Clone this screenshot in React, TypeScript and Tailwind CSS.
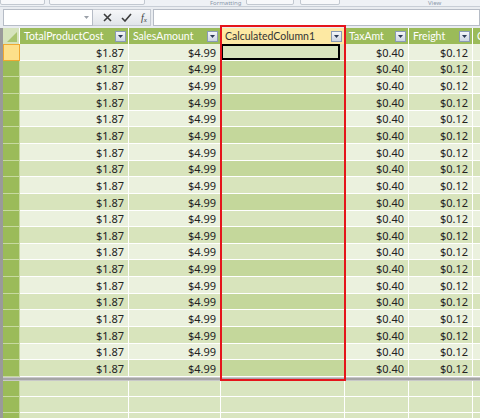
import React from 'react'

const font = { fontFamily: '"Noto Sans", "Open Sans", sans-serif' }
const headFont = { fontFamily: 'Lato, "Noto Sans", sans-serif' }

type Col = { key: string; title: string; width: string; value: string; calc?: boolean }

const cols: Col[] = [
  { key: 'tpc', title: 'TotalProductCost', width: 'w-[109px]', value: '$1.87' },
  { key: 'sa', title: 'SalesAmount', width: 'w-[92px]', value: '$4.99' },
  { key: 'calc', title: 'CalculatedColumn1', width: 'w-[124px]', value: '', calc: true },
  { key: 'tax', title: 'TaxAmt', width: 'w-[64px]', value: '$0.40' },
  { key: 'fr', title: 'Freight', width: 'w-[64px]', value: '$0.12' },
  { key: 'next', title: 'C', width: 'w-[20px]', value: '' },
]

const ROWS = 20

function rowHeight(i: number) {
  return Math.round((i + 1) * 16.65) - Math.round(i * 16.65)
}

function FilterButton() {
  return (
    <span className="flex h-[11px] w-[11px] shrink-0 items-center justify-center border border-[#8a9bb5] bg-gradient-to-b from-[#f4f6fa] to-[#cdd5e2]">
      <svg width="5" height="3" viewBox="0 0 5 3">
        <path d="M0 0h5L2.5 3z" fill="#2b3a55" />
      </svg>
    </span>
  )
}

function Ribbon() {
  return (
    <div className="relative h-[7px] overflow-hidden border-b border-[#c8ced6] bg-[#eef1f5]">
      <div className="absolute left-0 top-[-6px] h-[11px] w-[45px] rounded-[2px] border border-[#c2c8d0] bg-[#f7f8fa]" />
      <div className="absolute left-[49px] top-[-6px] h-[11px] w-[96px] rounded-[2px] border border-[#c2c8d0] bg-[#f7f8fa]" />
      <div className="absolute left-[210px] top-0 text-[6px] leading-[6px] text-[#8a96a8]">Formatting</div>
      <div className="absolute left-[246px] top-[-6px] h-[11px] w-[48px] rounded-[2px] border border-[#c2c8d0] bg-[#f7f8fa]" />
      <div className="absolute left-[300px] top-[-6px] h-[11px] w-[40px] rounded-[2px] border border-[#c2c8d0] bg-[#f7f8fa]" />
      <div className="absolute left-[428px] top-0 text-[6px] leading-[6px] text-[#8a96a8]">View</div>
    </div>
  )
}

function FormulaBar() {
  return (
    <div className="flex h-[21px] items-start bg-[#e9ecf0] pt-[2px]">
      <div className="ml-[3px] flex h-[17px] w-[90px] items-center justify-end border border-[#b6bcc6] bg-white pr-[3px]">
        <svg width="5" height="3" viewBox="0 0 5 3">
          <path d="M0 0h5L2.5 3z" fill="#9aa0a8" />
        </svg>
      </div>
      <div className="flex h-[17px] w-[58px] items-center gap-[9px] border-y border-r border-[#c4c9d1] bg-gradient-to-b from-[#f6f7f9] to-[#e1e5ea] pl-[10px]">
        <svg width="9" height="9" viewBox="0 0 9 9">
          <path d="M1 1l7 7M8 1L1 8" stroke="#3c3c3c" strokeWidth="1.6" />
        </svg>
        <svg width="11" height="9" viewBox="0 0 11 9">
          <path d="M1 5l3 3 6-7" stroke="#3c3c3c" strokeWidth="1.6" fill="none" />
        </svg>
        <span className="text-[10px] italic leading-none text-[#3c3c3c]" style={{ fontFamily: '"Liberation Serif", serif' }}>
          f<sub className="text-[7px]">x</sub>
        </span>
      </div>
      <div className="ml-[2px] h-[17px] flex-1 border border-[#b6bcc6] bg-white" />
    </div>
  )
}

function HeaderRow() {
  return (
    <div className="flex h-[16px]" style={headFont}>
      <div className="relative w-[17px] shrink-0 border-r border-white bg-[#d6e3bc]">
        <svg className="absolute bottom-[2px] right-[2px]" width="10" height="10" viewBox="0 0 10 10">
          <path d="M10 0v10H0z" fill="#a9c46e" />
        </svg>
      </div>
      {cols.map((c) => (
        <div
          key={c.key}
          className={`flex ${c.width} shrink-0 items-center justify-between overflow-hidden border-r border-white pl-[4px] pr-[2px] text-[10.5px] ${
            c.calc ? 'bg-[#fde9a3] text-[#333]' : 'bg-[#9bbb59] text-white'
          }`}
        >
          <span className="whitespace-nowrap leading-none">{c.title}</span>
          {c.key !== 'next' && <FilterButton />}
        </div>
      ))}
    </div>
  )
}

function DataRow({ i }: { i: number }) {
  const h = rowHeight(i)
  const light = i % 2 === 0
  return (
    <div className={`flex ${h === 17 ? 'h-[17px]' : 'h-[16px]'}`}>
      <div
        className={`w-[17px] shrink-0 ${
          i === 0 ? 'border border-[#f0a830] bg-[#fde08a]' : 'border-b border-r border-[#c7d9a0] bg-[#9bbb59]'
        }`}
      />
      {cols.map((c) => {
        let bg = light ? 'bg-[#ebf1de]' : 'bg-[#d8e4bc]'
        if (c.calc) bg = light ? 'bg-[#d8e4bc]' : 'bg-[#c4d79b]'
        return (
          <div
            key={c.key}
            className={`flex ${c.width} shrink-0 items-center justify-end border-b border-r border-white pr-[4px] text-[11px] text-[#222] ${bg}`}
          >
            {c.calc && i === 0 ? (
              <div className="h-full w-full border-2 border-black" />
            ) : (
              <span className="leading-none">{c.value}</span>
            )}
          </div>
        )
      })}
    </div>
  )
}

function CalcRow() {
  return (
    <div className="flex h-[16px]">
      <div className="w-[17px] shrink-0 border-b border-r border-[#c7d9a0] bg-[#9bbb59]" />
      {cols.map((c) => (
        <div key={c.key} className={`${c.width} shrink-0 border-b border-r border-white bg-[#d9e5c0]`} />
      ))}
    </div>
  )
}

export default function App() {
  return (
    <div className="relative h-[418px] w-[480px] overflow-hidden bg-white" style={font}>
      <Ribbon />
      <FormulaBar />
      <div className="flex">
        <div className="w-[3px] shrink-0 bg-[#9a9a9a]" />
        <div className="flex flex-col">
          <HeaderRow />
          {Array.from({ length: ROWS }, (_, i) => (
            <DataRow key={i} i={i} />
          ))}
          <div className="h-[4px] border-y border-[#c8c8c8] bg-[#a6a6a6]" />
          <CalcRow />
          <CalcRow />
          <CalcRow />
        </div>
      </div>
      <div className="pointer-events-none absolute left-[220px] top-[25px] h-[356px] w-[126px] border-2 border-[#e5141b]" />
    </div>
  )
}
